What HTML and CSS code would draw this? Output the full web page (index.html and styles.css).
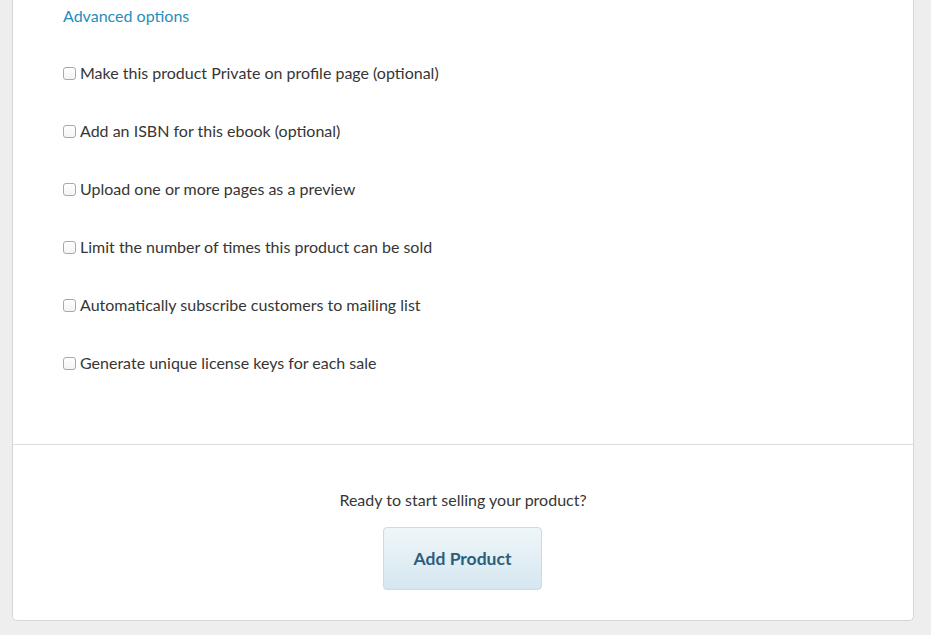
FILE: index.html
```html
<!DOCTYPE html>
<html lang="en">
<head>
  <meta charset="UTF-8">
  <meta name="viewport" content="width=device-width, initial-scale=1.0">
  <title>Add Product</title>
  <link rel="stylesheet" href="styles.css">
</head>
<body>
<div class="card">
  <div class="options">
    <a class="toggle" href="#">Advanced options</a>
    <ul class="checks">
      <li><label><input type="checkbox"> Make this product Private on profile page (optional)</label></li>
      <li><label><input type="checkbox"> Add an ISBN for this ebook (optional)</label></li>
      <li><label><input type="checkbox"> Upload one or more pages as a preview</label></li>
      <li><label><input type="checkbox"> Limit the number of times this product can be sold</label></li>
      <li><label><input type="checkbox"> Automatically subscribe customers to mailing list</label></li>
      <li><label><input type="checkbox"> Generate unique license keys for each sale</label></li>
    </ul>
  </div>
  <div class="submit">
    <p>Ready to start selling your product?</p>
    <button class="btn">Add Product</button>
  </div>
</div>
</body>
</html>
```

FILE: styles.css
```css
* {
  padding: 0;
  margin: 0;
  box-sizing: border-box;
}

body {
  background: #eeeeee;
  font-family: Lato, "Open Sans", sans-serif;
  font-size: 16px;
  color: #363636;
  padding: 0 17px 15px 12px;
}

.card {
  background: #fff;
  border: 1px solid #d6d6d6;
  border-top: 0;
  border-radius: 0 0 5px 5px;
}

.options {
  padding: 5px 50px 70px;
}

.toggle {
  display: block;
  line-height: 22px;
  color: #1f8dc0;
  text-decoration: none;
}

.checks {
  list-style: none;
  display: flex;
  flex-direction: column;
  gap: 36px;
  margin-top: 35px;
}

.checks label {
  display: flex;
  align-items: center;
  gap: 4px;
  line-height: 22px;
}

.checks input {
  appearance: none;
  width: 13px;
  height: 13px;
  margin: 0;
  border: 1px solid #a9a9a9;
  border-radius: 3px;
  background: linear-gradient(#fff, #f4f4f4);
}

.submit {
  border-top: 1px solid #dcdcdc;
  padding: 44px 0 30px;
  display: flex;
  flex-direction: column;
  align-items: center;
}

.submit p {
  line-height: 22px;
}

.btn {
  margin: 16px 1px 0 0;
  width: 159px;
  height: 63px;
  border: 1px solid #c6dce8;
  border-radius: 4px;
  background: linear-gradient(#eff6f9, #d5e7f0);
  font-family: inherit;
  font-size: 17.5px;
  font-weight: bold;
  color: #2e5d7b;
}
```
